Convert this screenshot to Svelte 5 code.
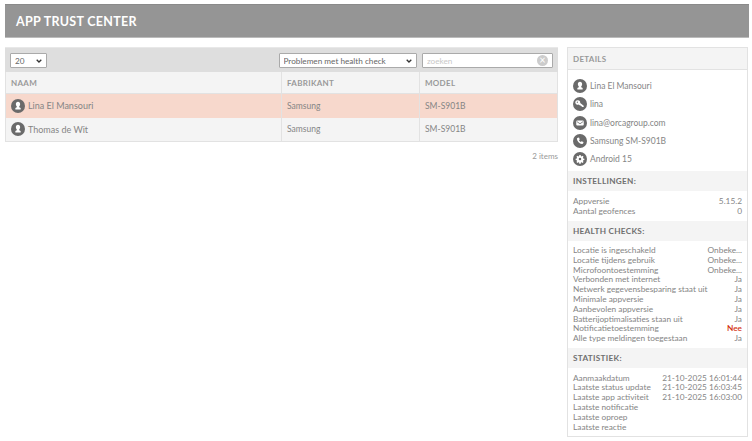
<script>
  const rows = [
    { name: 'Lina El Mansouri', maker: 'Samsung', model: 'SM-S901B', flagged: true },
    { name: 'Thomas de Wit', maker: 'Samsung', model: 'SM-S901B', flagged: false }
  ];
  const details = [
    { icon: 'user', text: 'Lina El Mansouri' },
    { icon: 'key', text: 'lina' },
    { icon: 'mail', text: 'lina@orcagroup.com' },
    { icon: 'phone', text: 'Samsung SM-S901B' },
    { icon: 'gear', text: 'Android 15' }
  ];
  const settings = [['Appversie', '5.15.2'], ['Aantal geofences', '0']];
  const checks = [
    ['Locatie is ingeschakeld', 'Onbeke...'],
    ['Locatie tijdens gebruik', 'Onbeke...'],
    ['Microfoontoestemming', 'Onbeke...'],
    ['Verbonden met internet', 'Ja'],
    ['Netwerk gegevensbesparing staat uit', 'Ja'],
    ['Minimale appversie', 'Ja'],
    ['Aanbevolen appversie', 'Ja'],
    ['Batterijoptimalisaties staan uit', 'Ja'],
    ['Notificatietoestemming', 'Nee'],
    ['Alle type meldingen toegestaan', 'Ja']
  ];
  const stats = [
    ['Aanmaakdatum', '21-10-2025 16:01:44'],
    ['Laatste status update', '21-10-2025 16:03:45'],
    ['Laatste app activiteit', '21-10-2025 16:03:00'],
    ['Laatste notificatie', ''],
    ['Laatste oproep', ''],
    ['Laatste reactie', '']
  ];
</script>

{#snippet icon(kind)}
  <svg class="icon" viewBox="0 0 28 28" aria-hidden="true">
    <circle cx="14" cy="14" r="14" fill="#6a6a6a" />
    {#if kind === 'user'}
      <path d="M14 5.500c2.800 0 4.300 2.100 4.300 4.800 0 1.900-.8 3.500-1.800 4.400v1.800l2.800 1.300v3.200H8.700v-3.200l2.800-1.300v-1.800c-1-.9-1.800-2.500-1.800-4.400 0-2.700 1.500-4.800 4.300-4.800z" fill="#fff" />
    {:else if kind === 'key'}
      <path d="M10 6.500a4.500 4.500 0 0 1 4.400 5.500l7 5.300v2.700h-3l-1-1.300h-1.700v-1.700H14l-2.700-2.200A4.500 4.500 0 1 1 10 6.500zM8.800 9a1.300 1.300 0 1 0 0 2.600 1.300 1.300 0 0 0 0-2.600z" fill="#fff" />
    {:else if kind === 'mail'}
      <rect x="6.500" y="9" width="15" height="10" rx="2" fill="#fff" />
      <path d="M7.500 11l6.500 4.500 6.500-4.500" fill="none" stroke="#6a6a6a" stroke-width="1.600" />
    {:else if kind === 'phone'}
      <path d="M9.800 7.500l2.300-.5 1.400 4-1.600 1.400c.7 1.600 2 2.900 3.700 3.700l1.400-1.600 4 1.400-.5 2.300c-.3 1.400-1.300 2.200-2.700 2-5.200-.7-9.300-4.800-10-10-.2-1.300.7-2.400 2-2.700z" fill="#fff" />
    {:else}
      <path d="M12.600 6h2.800l.4 2.200 1.400.6 1.900-1.200 2 2-1.200 1.900.6 1.400 2.200.4v2.800l-2.200.4-.6 1.400 1.200 1.900-2 2-1.900-1.200-1.400.6-.4 2.200h-2.800l-.4-2.200-1.400-.6-1.900 1.200-2-2 1.200-1.900-.6-1.400-2.200-.4v-2.800l2.200-.4.6-1.400-1.200-1.900 2-2 1.900 1.200 1.400-.6zM14 11.500a2.500 2.500 0 1 0 0 5 2.500 2.500 0 0 0 0-5z" fill="#fff" fill-rule="evenodd" />
    {/if}
  </svg>
{/snippet}

{#snippet pairs(list)}
  <ul class="pairs">
    {#each list as [label, value]}
      <li>
        <span>{label}</span>
        <span class:bad={value === 'Nee'}>{value}</span>
      </li>
    {/each}
  </ul>
{/snippet}

<header class="topbar"><h1>APP TRUST CENTER</h1></header>

<div class="page">
  <main class="list">
    <div class="toolbar">
      <select class="size">
        <option>20</option>
      </select>
      <select class="filter">
        <option>Problemen met health check</option>
      </select>
      <div class="search">
        <input placeholder="zoeken" />
        <span class="clear">×</span>
      </div>
    </div>
    <div class="table">
      <div class="row head">
        <div>NAAM</div>
        <div>FABRIKANT</div>
        <div>MODEL</div>
      </div>
      {#each rows as row}
        <div class="row" class:flagged={row.flagged}>
          <div class="name">{@render icon('user')}{row.name}</div>
          <div>{row.maker}</div>
          <div>{row.model}</div>
        </div>
      {/each}
    </div>
    <p class="count">2 items</p>
  </main>

  <aside class="details">
    <h2 class="first">DETAILS</h2>
    <ul class="info">
      {#each details as item}
        <li>{@render icon(item.icon)}{item.text}</li>
      {/each}
    </ul>
    <h2>INSTELLINGEN:</h2>
    {@render pairs(settings)}
    <h2>HEALTH CHECKS:</h2>
    {@render pairs(checks)}
    <h2>STATISTIEK:</h2>
    {@render pairs(stats)}
  </aside>
</div>

<style>
  :global(body) {
    margin: 0;
    background: #fff;
    color: #858585;
    font-family: Lato, "Open Sans", sans-serif;
    font-size: 8.500px;
  }

  .topbar {
    box-sizing: border-box;
    height: 34px;
    margin: 4px 3px 0 5px;
    padding-left: 11px;
    display: flex;
    align-items: center;
    background: #959595;
    border-top: 1px solid #8a8a8a;
    border-bottom: 1px solid #bbb;
  }

  h1 {
    margin: 0;
    color: #fff;
    font-size: 12.500px;
    font-weight: 700;
    letter-spacing: 0.3px;
  }

  .page {
    display: flex;
    gap: 9px;
    margin: 9px 3px 0 5px;
    align-items: flex-start;
  }

  .list {
    width: 553px;
  }

  .toolbar {
    box-sizing: border-box;
    height: 25px;
    padding: 5px 5px 0;
    display: flex;
    background: #dedede;
    border-top: 1px solid #e8e8e8;
  }

  select, input {
    box-sizing: border-box;
    height: 15px;
    font: inherit;
    font-size: 8.200px;
    color: #666;
    background-color: #fff;
    border: 1px solid #aaa;
    border-radius: 1px;
  }

  select {
    appearance: none;
    padding: 0 4px;
    background-repeat: no-repeat;
    background-position: right 4px center;
    background-size: 6px 4px;
    background-image: url("data:image/svg+xml,%3Csvg xmlns='http://www.w3.org/2000/svg' viewBox='0 0 6 4'%3E%3Cpath d='M.7.7 3 3 5.300.7' fill='none' stroke='%23333' stroke-width='1.300'/%3E%3C/svg%3E");
  }

  .size {
    width: 37px;
  }

  .filter {
    width: 138.500px;
    margin-left: auto;
  }

  .search {
    position: relative;
    width: 131px;
    margin-left: 5px;
  }

  input {
    width: 100%;
    padding: 0 4px;
  }

  input::placeholder {
    color: #c8c8c8;
  }

  .clear {
    position: absolute;
    right: 5px;
    top: 2px;
    width: 11px;
    height: 11px;
    border-radius: 50%;
    background: #ccc;
    color: #fff;
    font-size: 11px;
    line-height: 10px;
    text-align: center;
  }

  .table {
    border: 1px solid #e2e2e2;
    border-top: 0;
  }

  .row {
    display: grid;
    grid-template-columns: 275px 138px 1fr;
    height: 23.500px;
    background: #f4f4f4;
  }

  .row > div {
    display: flex;
    align-items: center;
    padding-left: 5px;
    border-left: 1px solid #e2e2e2;
  }

  .row > div:first-child {
    border-left: 0;
  }

  .row.head {
    height: 21px;
    font-size: 8px;
    font-weight: 700;
    color: #999;
    border-bottom: 1px solid #e2e2e2;
    letter-spacing: 0.3px;
  }

  .row > div.name {
    font-size: 9px;
  }

  .flagged {
    background: #f7d8cc;
  }

  .icon {
    width: 14px;
    height: 14px;
    flex: none;
    margin-right: 3px;
  }

  .count {
    margin: 8.500px 0 0;
    text-align: right;
    font-size: 8px;
    color: #999;
  }

  .details {
    box-sizing: border-box;
    width: 181px;
    height: 390px;
    border: 1px solid #e2e2e2;
  }

  h2 {
    margin: 0;
    height: 20px;
    padding-left: 5px;
    display: flex;
    align-items: center;
    font-size: 8.200px;
    font-weight: 700;
    color: #707070;
    background: #f4f4f4;
    letter-spacing: 0.3px;
  }

  h2.first {
    height: 21px;
    font-size: 8px;
    color: #999;
    border-bottom: 1px solid #e2e2e2;
  }

  ul {
    list-style: none;
    margin: 0;
    padding: 0;
  }

  .info {
    padding: 7px 5px 3px;
  }

  .info li {
    display: flex;
    align-items: center;
    height: 18.300px;
  }

  .pairs {
    padding: 4.500px 5px 5px;
  }

  .pairs li {
    display: flex;
    justify-content: space-between;
    height: 9.800px;
    line-height: 10px;
    font-size: 8.300px;
    white-space: nowrap;
  }

  .bad {
    color: #d32f0f;
    font-weight: 600;
  }
</style>
